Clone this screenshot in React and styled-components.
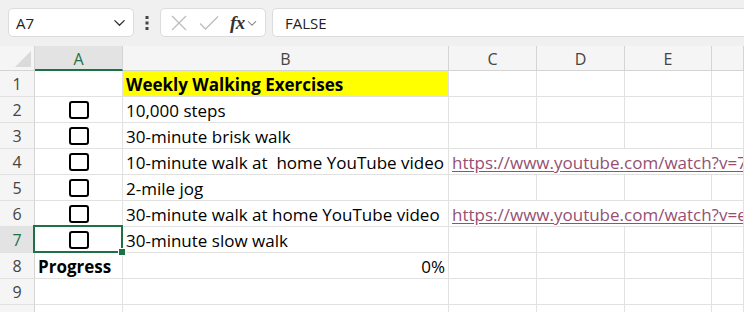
import React from "react";
import styled, { createGlobalStyle } from "styled-components";

const GlobalStyle = createGlobalStyle`
  html, body {
    margin: 0;
    padding: 0;
    background: #ffffff;
    overflow: hidden;
  }
  body {
    font-family: "Open Sans", "Noto Sans", sans-serif;
  }
`;

const green = "#1e7145";
const gridLine = "#e1e1e1";
const headLine = "#d4d4d4";

const Page = styled.div`
  width: 744px;
  height: 312px;
  overflow: hidden;
  display: flex;
  flex-direction: column;
`;

const Toolbar = styled.div`
  height: 46px;
  flex-shrink: 0;
  box-sizing: border-box;
  padding: 8px 0 9px 8px;
  background: #f0f0f0;
  display: flex;
  align-items: stretch;
`;

const Box = styled.div`
  background: #ffffff;
  border: 1px solid #dcdcdc;
  border-radius: 5px;
  box-sizing: border-box;
  display: flex;
  align-items: center;
`;

const NameBox = styled(Box)`
  width: 126px;
  padding: 0 6px 0 7px;
  justify-content: space-between;
  font-size: 15px;
  color: #222;
`;

const Dots = styled.div`
  width: 26px;
  display: flex;
  align-items: center;
  justify-content: center;
`;

const FxBox = styled(Box)`
  width: 106px;
  padding: 0 0 0 10px;
`;

const FormulaInput = styled(Box)`
  flex: 1;
  margin-left: 6px;
  padding-left: 12px;
  border-right: none;
  border-top-right-radius: 0;
  border-bottom-right-radius: 0;
  font-size: 15px;
  color: #222;
`;

const FxText = styled.span`
  font-family: "Liberation Serif", "DejaVu Serif", serif;
  font-style: italic;
  font-weight: bold;
  font-size: 19px;
  color: #333;
  margin: 0 1px 0 11px;
  letter-spacing: -0.5px;
`;

const Sheet = styled.div`
  display: grid;
  grid-template-columns: 35px 88px 326px 88px 88px 87px 1fr;
  grid-template-rows: 25px repeat(10, 26px);
  flex-shrink: 0;
`;

const Corner = styled.div`
  background: #f5f5f5;
  border-right: 1px solid ${headLine};
  border-bottom: 1px solid ${headLine};
  position: relative;
  &::after {
    content: "";
    position: absolute;
    right: 3px;
    bottom: 3px;
    width: 16px;
    height: 16px;
    background: #dadada;
    clip-path: polygon(100% 0, 100% 100%, 0 100%);
  }
`;

const ColHead = styled.div`
  background: ${(p) => (p.$active ? "#e3e3e3" : "#f5f5f5")};
  color: ${(p) => (p.$active ? green : "#444")};
  border-right: 1px solid ${headLine};
  border-bottom: ${(p) => (p.$active ? `2px solid ${green}` : `1px solid ${headLine}`)};
  box-sizing: border-box;
  display: flex;
  align-items: center;
  justify-content: center;
  font-size: 16px;
  padding-top: 2px;
`;

const RowHead = styled.div`
  background: ${(p) => (p.$active ? "#e3e3e3" : "#f5f5f5")};
  color: ${(p) => (p.$active ? green : "#444")};
  border-right: 1px solid ${(p) => (p.$active ? green : headLine)};
  border-bottom: 1px solid ${gridLine};
  box-sizing: border-box;
  display: flex;
  align-items: center;
  justify-content: center;
  font-size: 16px;
`;

const Cell = styled.div`
  position: relative;
  box-sizing: border-box;
  border-right: 1px solid ${gridLine};
  border-bottom: 1px solid ${gridLine};
  background: ${(p) => p.$fill || "#ffffff"};
  grid-column: ${(p) => (p.$span ? `span ${p.$span}` : "auto")};
  display: flex;
  align-items: center;
  justify-content: ${(p) =>
    p.$align === "center" ? "center" : p.$align === "right" ? "flex-end" : "flex-start"};
  padding: 1px 3px 0 3px;
  font-family: "Open Sans", "Noto Sans", sans-serif;
  font-size: 17px;
  font-weight: ${(p) => (p.$bold ? 700 : 400)};
  color: #000;
  white-space: pre;
  overflow: hidden;

  ${(p) =>
    p.$selected &&
    `
    overflow: visible;
    &::after {
      content: "";
      position: absolute;
      left: -2px;
      top: -2px;
      right: -1px;
      bottom: -1px;
      border: 2px solid ${green};
      pointer-events: none;
      z-index: 2;
    }
    &::before {
      content: "";
      position: absolute;
      right: -4px;
      bottom: -4px;
      width: 6px;
      height: 6px;
      background: ${green};
      border: 1px solid #fff;
      z-index: 3;
    }
  `}
`;

const Link = styled.span`
  color: #954f72;
  text-decoration: underline;
  text-underline-offset: 2px;
`;

const CheckBox = styled.span`
  width: 16px;
  height: 14px;
  border: 2px solid #000;
  border-radius: 3px;
  display: inline-block;
`;

const ChevronDown = ({ size = 14, color = "#444" }) => (
  <svg width={size} height={size} viewBox="0 0 16 16" fill="none">
    <path d="M3 6 L8 11 L13 6" stroke={color} strokeWidth="1.4" strokeLinecap="round" strokeLinejoin="round" />
  </svg>
);

const columns = ["A", "B", "C", "D", "E", ""];

const rows = [
  { a: null, b: "Weekly Walking Exercises", bold: true, fill: "#ffff00" },
  { a: "box", b: "10,000 steps" },
  { a: "box", b: "30-minute brisk walk" },
  { a: "box", b: "10-minute walk at  home YouTube video", link: "https://www.youtube.com/watch?v=7Hk1zJ0yKQo" },
  { a: "box", b: "2-mile jog" },
  { a: "box", b: "30-minute walk at home YouTube video", link: "https://www.youtube.com/watch?v=enYITYwvPAQ" },
  { a: "box", b: "30-minute slow walk", selected: true },
  { a: "Progress", b: "0%", right: true },
  {},
  {},
];

export default function App() {
  return (
    <Page>
      <GlobalStyle />
      <Toolbar>
        <NameBox>
          <span>A7</span>
          <ChevronDown size={15} color="#333" />
        </NameBox>
        <Dots>
          <svg width="4" height="14" viewBox="0 0 4 14">
            <rect x="0.5" y="0" width="3" height="3" fill="#444" />
            <rect x="0.5" y="5.5" width="3" height="3" fill="#444" />
            <rect x="0.5" y="11" width="3" height="3" fill="#444" />
          </svg>
        </Dots>
        <FxBox>
          <svg width="16" height="16" viewBox="0 0 16 16">
            <path d="M1 1 L15 15 M15 1 L1 15" stroke="#bdbdbd" strokeWidth="1.3" />
          </svg>
          <svg width="20" height="16" viewBox="0 0 20 16" style={{ marginLeft: 12 }}>
            <path d="M1 8.5 L6.5 14 L19 1.5" stroke="#bdbdbd" strokeWidth="1.3" fill="none" />
          </svg>
          <FxText>fx</FxText>
          <ChevronDown size={12} color="#777" />
        </FxBox>
        <FormulaInput>FALSE</FormulaInput>
      </Toolbar>
      <Sheet>
        <Corner />
        {columns.map((c, i) => (
          <ColHead key={i} $active={c === "A"}>
            {c}
          </ColHead>
        ))}
        {rows.map((r, i) => {
          const n = i + 1;
          return (
            <React.Fragment key={n}>
              <RowHead $active={r.selected}>{n}</RowHead>
              <Cell $align={r.a === "box" ? "center" : "left"} $bold={r.a === "Progress"} $selected={r.selected}>
                {r.a === "box" ? <CheckBox /> : r.a}
              </Cell>
              <Cell $fill={r.fill} $bold={r.bold} $align={r.right ? "right" : "left"}>
                {r.b}
              </Cell>
              {r.link ? (
                <Cell $span={4}>
                  <Link>{r.link}</Link>
                </Cell>
              ) : (
                <>
                  <Cell />
                  <Cell />
                  <Cell />
                  <Cell />
                </>
              )}
            </React.Fragment>
          );
        })}
      </Sheet>
    </Page>
  );
}
